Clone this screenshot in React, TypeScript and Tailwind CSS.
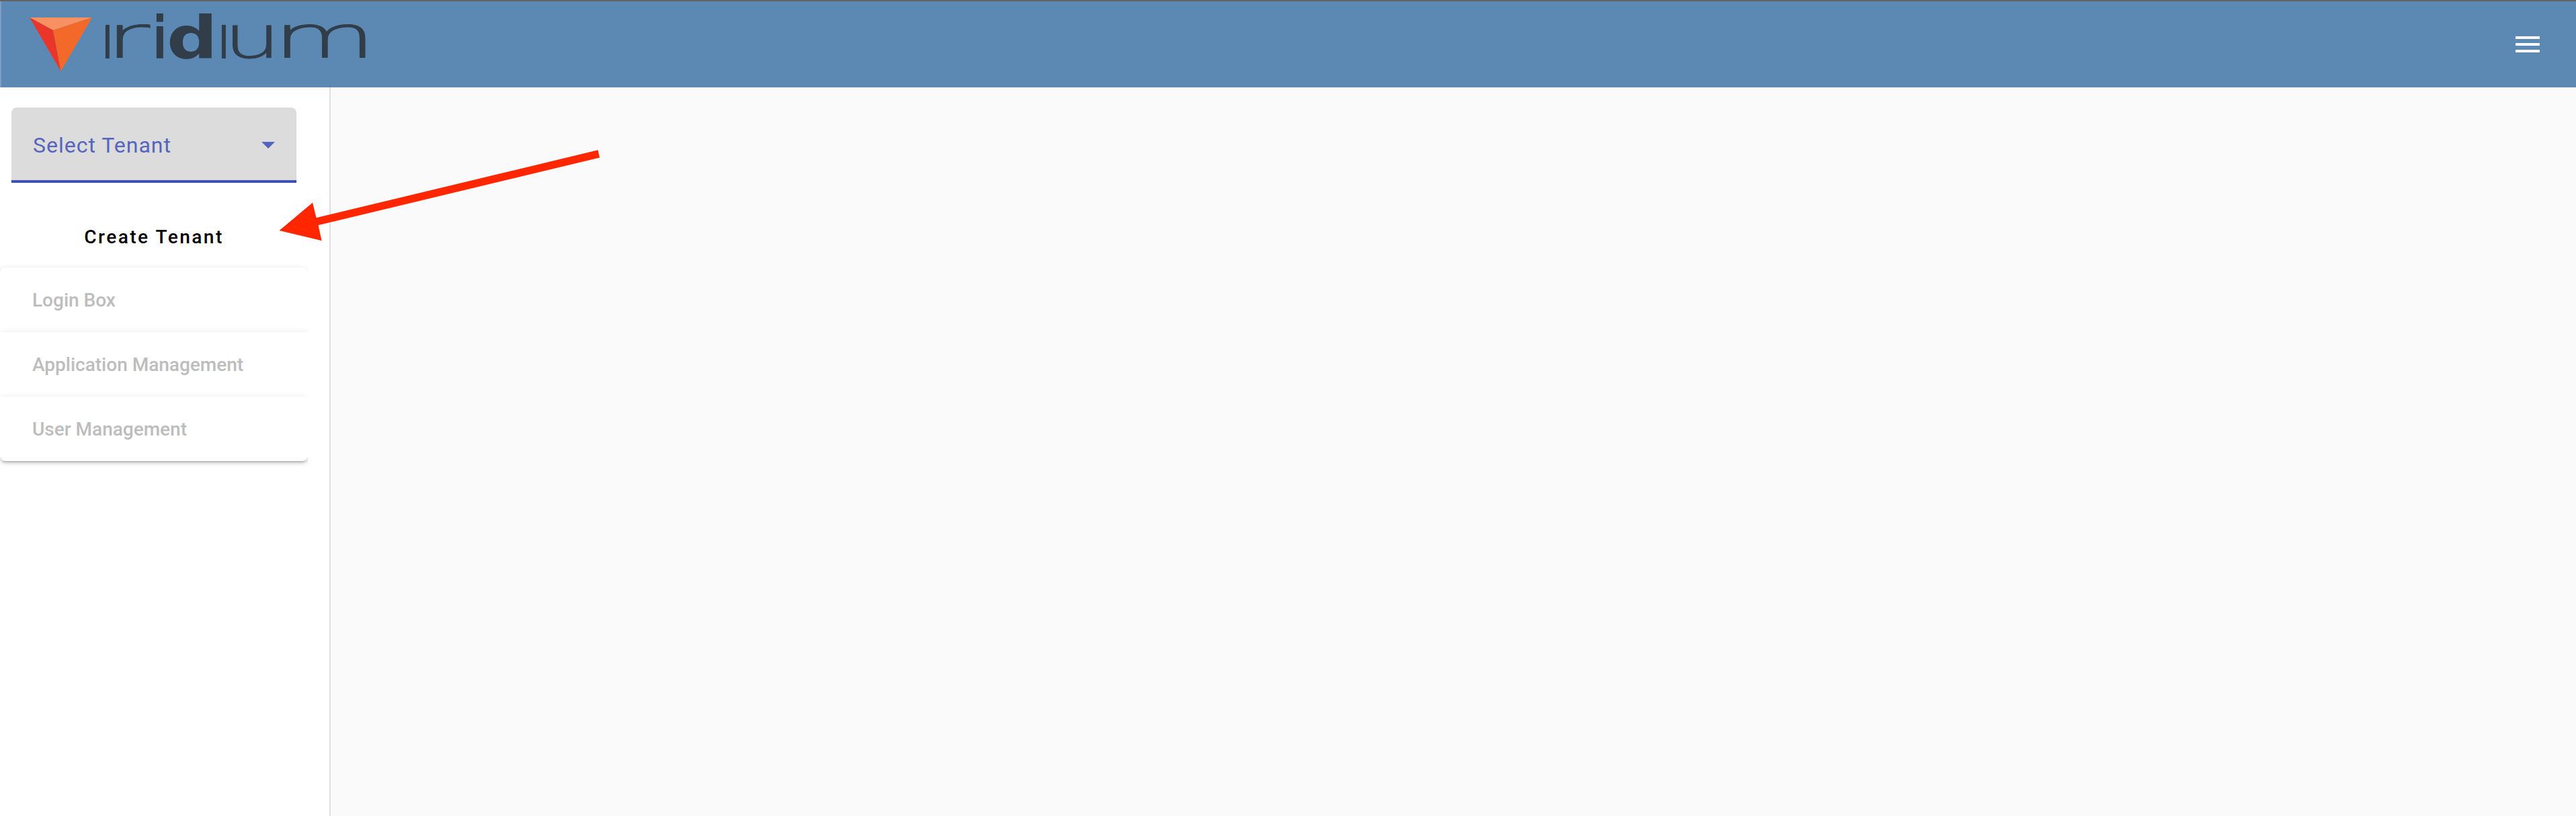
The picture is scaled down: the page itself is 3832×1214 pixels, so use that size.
type Glyph = { ch: string; x: number; sx: number; bold?: boolean };

// Wordmark letters: left origin and horizontal stretch on a shared baseline.
const wordmark: Glyph[] = [
  { ch: "ı", x: 148, sx: 1 },
  { ch: "r", x: 156, sx: 1.85 },
  { ch: "i", x: 228, sx: 0.65, bold: true },
  { ch: "d", x: 248, sx: 1.2, bold: true },
  { ch: "ı", x: 321, sx: 1 },
  { ch: "u", x: 332, sx: 1.55 },
  { ch: "m", x: 406, sx: 1.79 },
];

function Logo() {
  return (
    <svg width="600" height="128" viewBox="0 2 600 128" role="img" aria-label="Iridium">
      <path d="M44 26H137L79 45Z" fill="#f79162" />
      <path d="M44 26L79 45L90.500 106Z" fill="#ea352a" />
      <path d="M137 26L79 45L90.500 106Z" fill="#f26929" />
      {wordmark.map((g, i) => (
        <text
          key={i}
          transform={`translate(${g.x} 86) scale(${g.sx} 1)`}
          fill="#313d49"
          stroke="#313d49"
          strokeWidth={g.bold ? 0 : g.sx === 1 ? 2 : 0.9}
          fontSize="88"
          fontFamily="DejaVu Sans, sans-serif"
          fontWeight={g.bold ? 700 : 200}
        >
          {g.ch}
        </text>
      ))}
    </svg>
  );
}

function Arrow() {
  return (
    <svg className="pointer-events-none absolute left-[410px] top-[215px]" width="490" height="150" viewBox="410 215 490 150">
      <path d="M415.500 343L465 301.500L470.500 324L889.500 223.300L892 234.500L473.500 335L478.500 358Z" fill="#ff2600" />
    </svg>
  );
}

const items = ["Login Box", "Application Management", "User Management"];
const round = ["rounded-t-lg", "", "rounded-b-lg"];

export default function App() {
  return (
    <div className="relative flex h-[1214px] w-[3832px] flex-col overflow-hidden bg-[#fafafa] font-['Roboto',sans-serif]">
      <header className="flex h-[130px] shrink-0 items-center justify-between border-t-2 border-[#636363] bg-[#5c89b4] shadow-[inset_2px_0_0_#7a9dc1]">
        <Logo />
        <button className="mr-[54px] flex w-9 flex-col gap-1.5" aria-label="Menu">
          <span className="h-1 w-full bg-[#fafafa]" />
          <span className="h-1 w-full bg-[#fafafa]" />
          <span className="h-1 w-full bg-[#fafafa]" />
        </button>
      </header>
      <div className="flex min-h-0 flex-1">
        <aside className="w-[492px] shrink-0 border-r-2 border-[#e0e0e0] bg-white pt-[30px]">
          <div className="ml-[17px] flex h-28 w-[424px] items-center justify-between rounded-t-lg border-b-4 border-[#3f51b5] bg-[#dcdcdc] px-8 pt-1">
            <span className="text-[32px] leading-none tracking-[1px] text-[#5565bd]">Select Tenant</span>
            <svg width="20" height="10" viewBox="0 0 20 10">
              <path d="M0 0H20L10 10Z" fill="#5565bd" />
            </svg>
          </div>
          <div className="w-[458px] overflow-hidden pb-6">
            <button className="flex h-[126px] w-full items-center justify-center pt-9 text-[28px] font-medium leading-none tracking-[2.500px] text-black">
              Create Tenant
            </button>
            <nav>
              {items.map((t, i) => (
                <div
                  key={t}
                  className={`flex h-24 items-center bg-white pl-12 pt-0.5 text-[28px] font-medium leading-none text-[#bdbdbd] shadow-[0_5px_2px_-4px_rgba(0,0,0,0.2),0_3px_4px_0_rgba(0,0,0,0.14),0_2px_10px_0_rgba(0,0,0,0.12)] ${round[i]}`}
                >
                  {t}
                </div>
              ))}
            </nav>
          </div>
        </aside>
        <main className="flex-1" />
      </div>
      <Arrow />
    </div>
  );
}
